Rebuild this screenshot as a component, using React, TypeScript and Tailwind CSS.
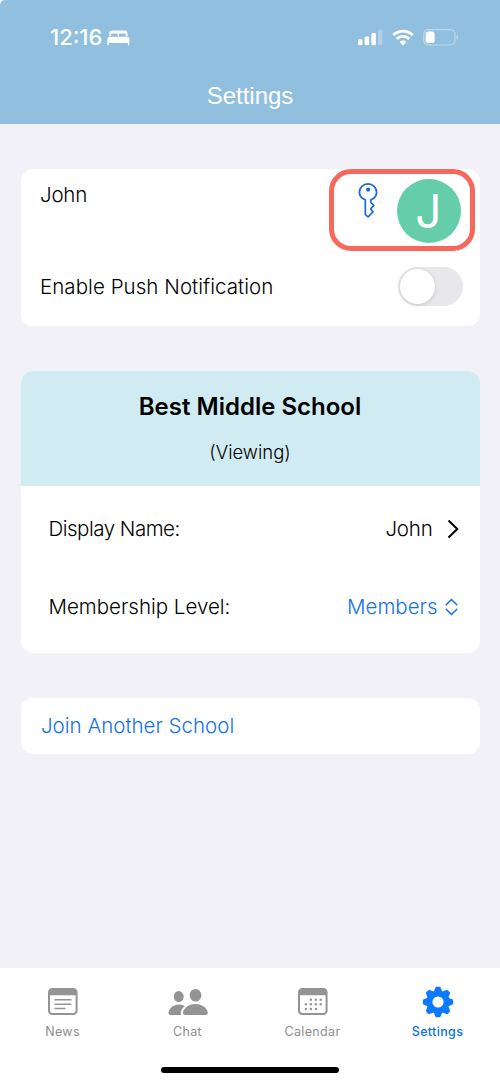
import { ReactNode } from "react";

const BedIcon = () => (
  <svg width="23" height="16" viewBox="0 0 23 16" fill="#fff">
    <path d="M2.300 6.200V3.200Q2.300.4 5.100.4H17.700Q20.500.4 20.500 3.200V6.200H18.800V4.800Q18.800 3.500 17.500 3.500H13.300Q12 3.500 12 4.800V6.200H10.800V4.800Q10.800 3.500 9.500 3.500H5.300Q4 3.500 4 4.800V6.200Z" />
    <path d="M3 6.700H19.800Q22.400 6.700 22.400 9.400V14.600Q22.400 15.500 21.600 15.500T20.800 14.600V13H2V14.600Q2 15.500 1.200 15.500T.4 14.600V9.400Q.4 6.700 3 6.700Z" />
  </svg>
);

const SignalIcon = () => (
  <svg width="25" height="17" viewBox="0 0 25 17" fill="#fff">
    <rect x="0" y="10.300" width="4.500" height="6" rx="1.300" />
    <rect x="6.700" y="7.500" width="4.500" height="8.800" rx="1.300" />
    <rect x="13.400" y="4" width="4.500" height="12.300" rx="1.300" />
    <rect x="20" y="0.500" width="4.500" height="15.800" rx="1.300" opacity="0.280" />
  </svg>
);

const WifiIcon = () => (
  <svg width="22" height="17" viewBox="0 0 22 17" fill="none" stroke="#fff" strokeWidth="2.900">
    <path d="M1.300 6a14 14 0 0 1 19.400 0" />
    <path d="M4.700 9.900a9 9 0 0 1 12.600 0" />
    <path d="M11 16.500 7.500 13a5 5 0 0 1 7 0z" fill="#fff" stroke="none" />
  </svg>
);

const BatteryIcon = () => (
  <svg width="36" height="17" viewBox="0 0 36 17">
    <rect x="0.700" y="0.700" width="31.300" height="15.300" rx="4.600" fill="none" stroke="#fff" strokeOpacity="0.400" strokeWidth="1.200" />
    <path d="M33.600 5.800c1.900.8 1.900 4.300 0 5.100z" fill="#fff" opacity="0.450" />
    <rect x="2.600" y="2.600" width="9" height="11.500" rx="2.900" fill="#fff" />
  </svg>
);

const KeyIcon = () => (
  <svg width="20" height="36" viewBox="0 0 20 36" fill="none" stroke="#1668e3" strokeWidth="1.700" strokeLinejoin="round">
    <path d="M7.300 16.700V31.300L10 34 15 28.900 12.900 26.300 13.200 25.200 15.900 22.500 12.900 19.600V16.700C16.500 15.500 18.600 12.700 18.600 9.300A8.500 8.300 0 0 0 1.400 9.300C1.400 12.700 3.600 15.500 7.300 16.700Z" />
    <circle cx="10.200" cy="6.600" r="2.100" fill="#1668e3" stroke="none" />
  </svg>
);

const NewsIcon = () => (
  <svg width="30" height="28" viewBox="0 0 30 28" fill="none" stroke="#949494">
    <rect x="1" y="1" width="27.600" height="25" rx="3.300" strokeWidth="2" />
    <path d="M1.500 7.200V4.500c0-2 1-3 3-3h20.600c2 0 3 1 3 3v2.700z" fill="#949494" stroke="none" />
    <path d="M6.500 11.700h17M6.500 16.200h17M6.500 20.500h11" strokeWidth="1.500" />
  </svg>
);

const ChatIcon = () => (
  <svg width="40" height="28" viewBox="0 0 40 28" fill="#949494">
    <ellipse cx="10.700" cy="8.600" rx="5" ry="5.600" />
    <path d="M13.100 27H2.400C1.300 27 .5 26.300.5 25.100c0-3.300 3.600-8.600 10.200-8.600 2.400 0 4.400.6 6 1.700-2.400 2-4 4.600-4 7 0 .7.100 1.300.4 1.800z" />
    <ellipse cx="27.500" cy="7.300" rx="5.800" ry="6.300" />
    <path d="M17.300 27c-1.600 0-2.400-.7-2.400-1.900 0-3.300 4.400-9 12.500-9 8.200 0 12.400 5.700 12.400 9 0 1.200-.8 1.900-2.400 1.900z" />
  </svg>
);

const CALENDAR_DOTS = [
  [12.9, 11.7], [17.9, 11.7], [22.7, 11.7],
  [7.9, 16.3], [12.9, 16.3], [17.9, 16.3], [22.7, 16.3],
  [7.9, 21], [12.9, 21], [17.9, 21],
];

const CalendarIcon = () => (
  <svg width="30" height="28" viewBox="0 0 30 28" fill="#949494">
    <rect x="1" y="1" width="27.600" height="25" rx="3.300" fill="none" stroke="#949494" strokeWidth="2" />
    <path d="M1.500 7.200V4.500c0-2 1-3 3-3h20.600c2 0 3 1 3 3v2.700z" />
    {CALENDAR_DOTS.map(([x, y]) => (
      <circle key={`${x}-${y}`} cx={x} cy={y} r="1.200" />
    ))}
  </svg>
);

const GEAR_TEETH = [0, 45, 90, 135, 180, 225, 270, 315];

const GearIcon = () => (
  <svg width="32" height="32" viewBox="-16 -16 32 32" fill="#0a7aff">
    <circle r="8.600" fill="none" stroke="#0a7aff" strokeWidth="6" />
    {GEAR_TEETH.map((angle) => (
      <path key={angle} transform={`rotate(${angle})`} d="M-4.200-10.300-2.700-14.200Q-2.300-15.200-1.300-15.200h2.600Q2.300-15.200 2.700-14.200L4.200-10.300z" />
    ))}
  </svg>
);

interface TabProps {
  label: string;
  icon: ReactNode;
  active?: boolean;
}

const Tab = ({ label, icon, active }: TabProps) => (
  <button className="flex flex-1 flex-col items-center">
    <div className="flex h-8 items-center justify-center">{icon}</div>
    <div
      className={`mt-1 text-[12.5px] leading-5 tracking-[0.35px] ${
        active ? "font-medium text-[#0a72f0]" : "font-normal text-[#8e8e8e]"
      }`}>
      {label}
    </div>
  </button>
);

const StatusBar = () => (
  <div className="flex h-[75px] items-center justify-between pl-[50px] pr-[41px]">
    <div className="flex items-center gap-[5px] text-[22px] font-medium text-white">
      12:16
      <BedIcon />
    </div>
    <div className="flex items-center gap-[9px]">
      <SignalIcon />
      <WifiIcon />
      <BatteryIcon />
    </div>
  </div>
);

export default function App() {
  return (
    <div className="bg-white">
      <div className="flex h-[1084px] w-[500px] flex-col overflow-hidden rounded-tl-[5px] bg-[#f2f1f7] font-['Inter','Liberation_Sans',sans-serif] text-[20.5px] font-[340] text-black">
        <header className="h-[124px] bg-[#90bfdf]">
          <StatusBar />
          <h1 className="text-center font-['Liberation_Sans',sans-serif] text-[24px] leading-[42px] text-white">
            Settings
          </h1>
        </header>

        <main className="flex flex-1 flex-col gap-[45px] px-[20.5px] pt-[45px]">
          <section className="relative h-[157px] rounded-xl bg-white pl-[19.5px] pr-[17px]">
            <div className="flex h-[83px] justify-between">
              <span className="pt-[11px] leading-[30px] tracking-[-0.2px]">John</span>
              <div className="flex gap-[19px] pt-[10px] pr-[2px]">
                <div className="pt-[4px]">
                  <KeyIcon />
                </div>
                <div className="flex size-[64px] items-center justify-center rounded-full bg-[#66cdaa] text-[46px] font-normal text-white">
                  J
                </div>
              </div>
            </div>
            <div className="flex h-[69px] items-center justify-between">
              <span className="pt-px tracking-[0.05px]">Enable Push Notification</span>
              <div className="flex h-[39px] w-[65px] items-center rounded-full bg-[#e8e8ea] px-[2px]">
                <div className="size-[35px] rounded-full bg-white shadow-[0_1px_4px_rgba(0,0,0,0.15)]" />
              </div>
            </div>
            {/* highlight around the key and avatar */}
            <div className="absolute top-0 right-[5px] h-[82px] w-[146px] rounded-[22px] border-[5px] border-[#f8685a]" />
          </section>

          <section className="h-[282px] overflow-hidden rounded-xl bg-white">
            <div className="h-[115px] bg-[#d0ebf1] pt-[20px] text-center">
              <h2 className="text-[24px] leading-[32px] font-semibold">Best Middle School</h2>
              <p className="mt-[15px] text-[18.5px] leading-[28px]">(Viewing)</p>
            </div>
            <div className="flex h-[86px] items-center justify-between pl-[28px] pr-[21px]">
              <span className="tracking-[-0.5px]">Display Name:</span>
              <div className="flex items-center gap-[14px] tracking-[-0.2px]">
                John
                <svg width="12" height="20" viewBox="0 0 12 20" fill="none" stroke="#000" strokeWidth="2">
                  <path d="m1.500 1.500 8.800 8.500-8.800 8.500" />
                </svg>
              </div>
            </div>
            <div className="flex h-[70px] items-center justify-between pl-[28px] pr-[22px]">
              <span>Membership Level:</span>
              <div className="flex items-center gap-[7px] text-[#1270ee]">
                Members
                <svg width="13" height="18" viewBox="0 0 13 18" fill="none" stroke="currentColor" strokeWidth="1.500" strokeLinecap="round">
                  <path d="m1.200 6.700 5.300-5.200 5.300 5.200M1.200 11.300l5.300 5.200 5.300-5.200" />
                </svg>
              </div>
            </div>
          </section>

          <section className="flex h-[56px] items-center rounded-xl bg-white pt-px pl-[20.5px] text-[#1270ee]">
            Join Another School
          </section>
        </main>

        <footer className="flex h-[116px] flex-col bg-white pt-[18px]">
          <nav className="flex">
            <Tab label="News" icon={<NewsIcon />} />
            <Tab label="Chat" icon={<ChatIcon />} />
            <Tab label="Calendar" icon={<CalendarIcon />} />
            <Tab label="Settings" icon={<GearIcon />} active />
          </nav>
          <div className="mx-auto mt-[25px] h-[6px] w-[178px] rounded-full bg-black" />
        </footer>
      </div>
    </div>
  );
}
